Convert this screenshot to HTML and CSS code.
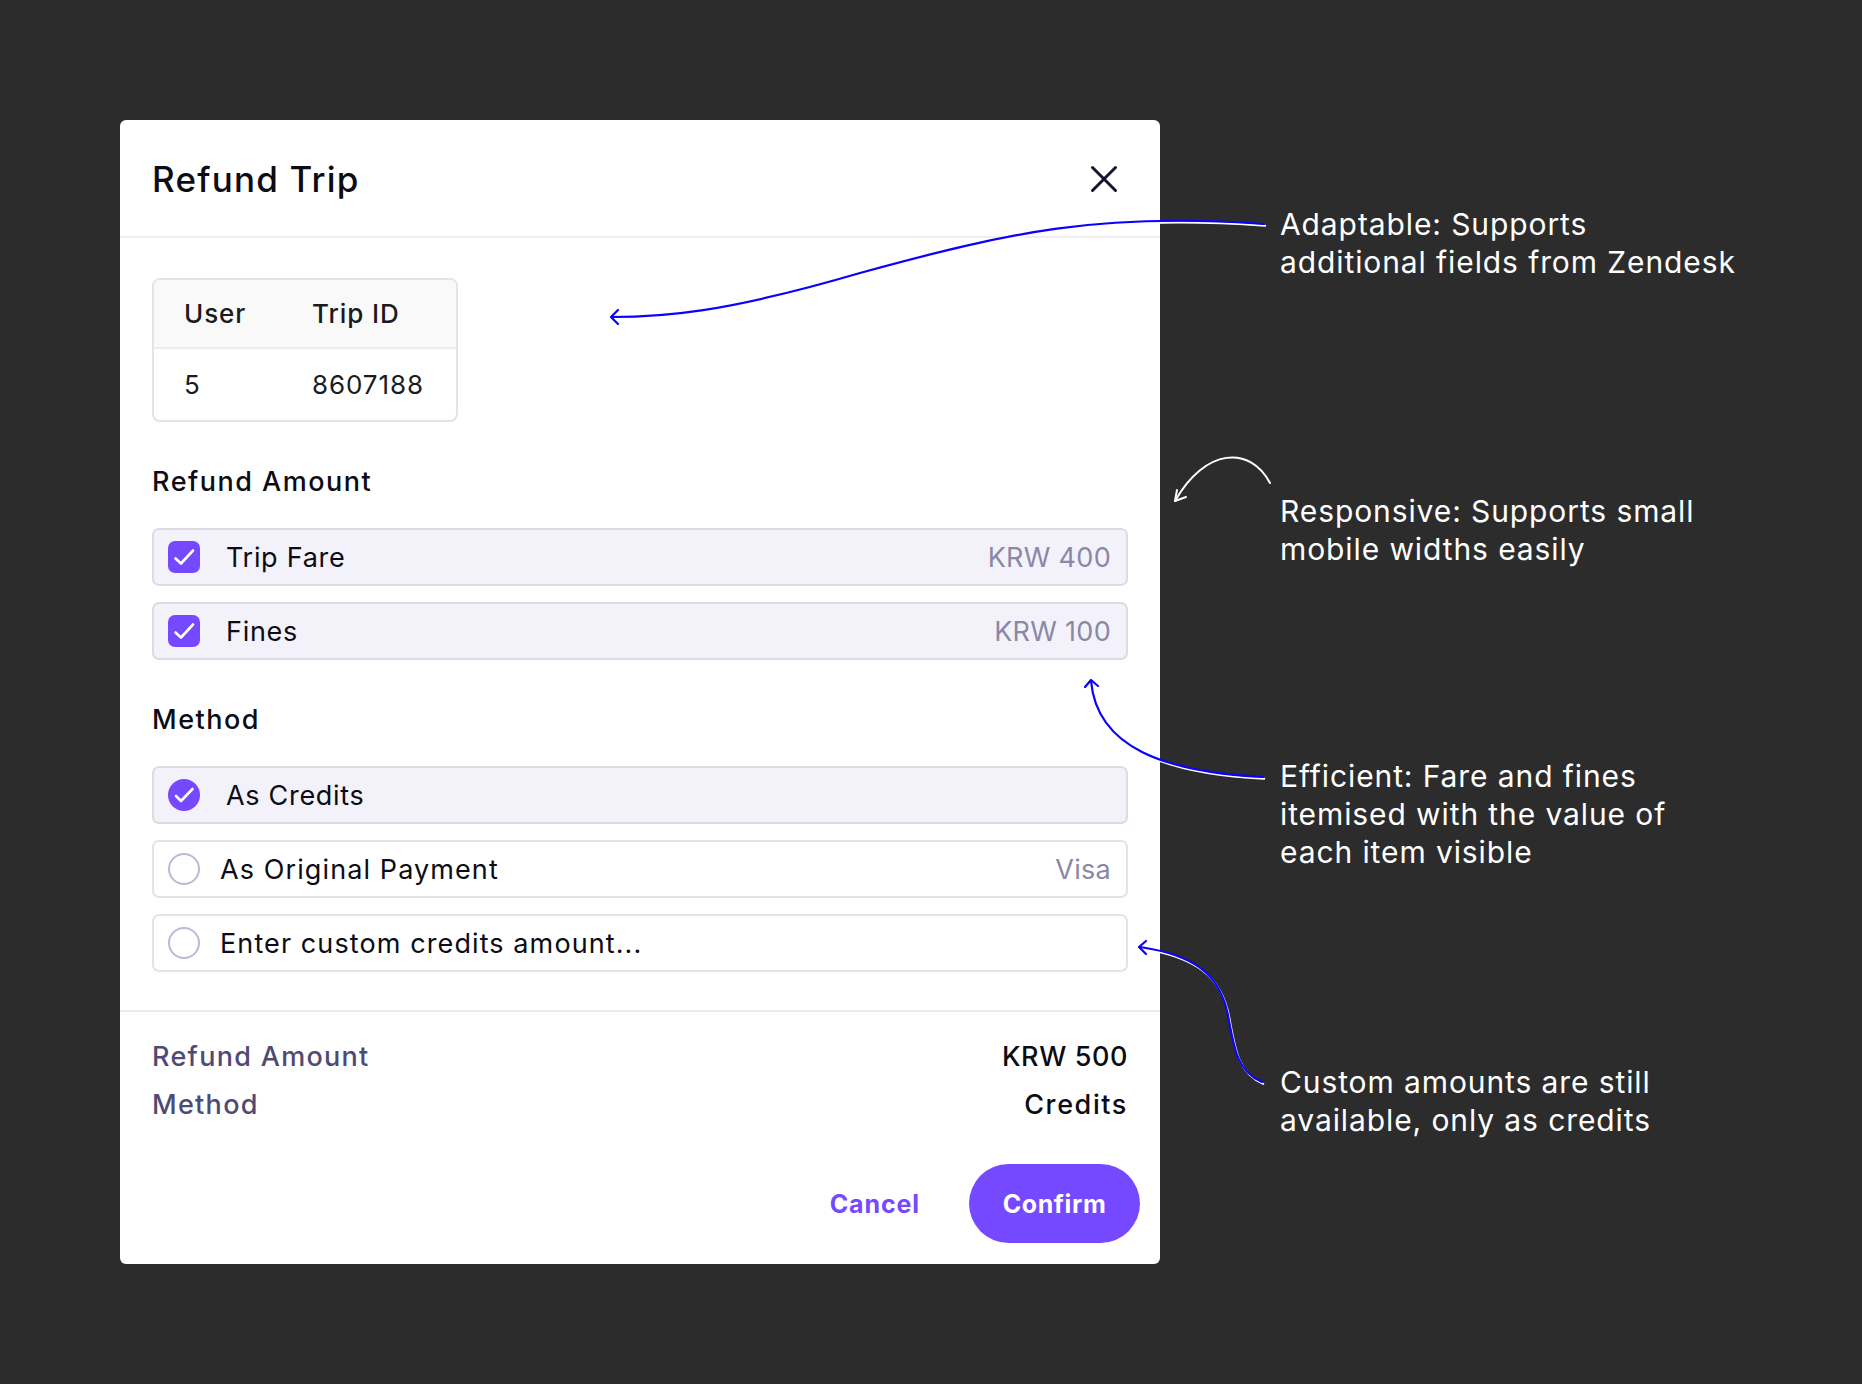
FILE: index.html
```html
<!DOCTYPE html>
<html lang="en">
<head>
<meta charset="utf-8">
<title>Refund Trip</title>
<link rel="stylesheet" href="styles.css">
</head>
<body>
<div class="stage">
  <div class="modal">
    <div class="modal-header">
      <h1 class="title">Refund Trip</h1>
      <svg class="close" width="28" height="28" viewBox="0 0 28 28"><path d="M2.5 2.5L25.5 25.5M25.5 2.5L2.5 25.5" stroke="#15142a" stroke-width="3" stroke-linecap="round" fill="none"/></svg>
    </div>
    <div class="modal-body">
      <div class="info-table">
        <div class="cell head">User</div>
        <div class="cell head">Trip ID</div>
        <div class="cell">5</div>
        <div class="cell">8607188</div>
      </div>

      <div class="section">
        <div class="section-label">Refund Amount</div>
        <div class="options">
          <div class="option selected">
            <svg class="ctl" width="32" height="32" viewBox="0 0 32 32"><rect width="32" height="32" rx="7" fill="#7549ff"/><path d="M7.5 17.5l5.5 5L25 9.5" stroke="#fff" stroke-width="2.6" fill="none" stroke-linecap="round" stroke-linejoin="round"/></svg>
            <span class="opt-label wide">Trip Fare</span>
            <span class="opt-value">KRW 400</span>
          </div>
          <div class="option selected">
            <svg class="ctl" width="32" height="32" viewBox="0 0 32 32"><rect width="32" height="32" rx="7" fill="#7549ff"/><path d="M7.5 17.5l5.5 5L25 9.5" stroke="#fff" stroke-width="2.6" fill="none" stroke-linecap="round" stroke-linejoin="round"/></svg>
            <span class="opt-label wide">Fines</span>
            <span class="opt-value">KRW 100</span>
          </div>
        </div>
      </div>

      <div class="section">
        <div class="section-label">Method</div>
        <div class="options">
          <div class="option selected">
            <svg class="ctl" width="32" height="32" viewBox="0 0 32 32"><circle cx="16" cy="16" r="16" fill="#7549ff"/><path d="M8 17l5 5L24.5 10" stroke="#fff" stroke-width="2.6" fill="none" stroke-linecap="round" stroke-linejoin="round"/></svg>
            <span class="opt-label wide">As Credits</span>
          </div>
          <div class="option">
            <svg class="ctl" width="32" height="32" viewBox="0 0 32 32"><circle cx="16" cy="16" r="15" fill="#fff" stroke="#bdb8d6" stroke-width="2"/></svg>
            <span class="opt-label">As Original Payment</span>
            <span class="opt-value">Visa</span>
          </div>
          <div class="option">
            <svg class="ctl" width="32" height="32" viewBox="0 0 32 32"><circle cx="16" cy="16" r="15" fill="#fff" stroke="#bdb8d6" stroke-width="2"/></svg>
            <span class="opt-label">Enter custom credits amount...</span>
          </div>
        </div>
      </div>
    </div>
    <div class="modal-footer">
      <div class="summary">
        <div class="sum-row"><span class="sum-key">Refund Amount</span><span class="sum-val">KRW 500</span></div>
        <div class="sum-row"><span class="sum-key">Method</span><span class="sum-val">Credits</span></div>
      </div>
      <div class="actions">
        <button class="btn-cancel">Cancel</button>
        <button class="btn-confirm">Confirm</button>
      </div>
    </div>
  </div>

  <div class="notes">
    <p class="note n1">Adaptable: Supports<br>additional fields from Zendesk</p>
    <p class="note n2">Responsive: Supports small<br>mobile widths easily</p>
    <p class="note n3">Efficient: Fare and fines<br>itemised with the value of<br>each item visible</p>
    <p class="note n4">Custom amounts are still<br>available, only as credits</p>
  </div>

  <svg class="arrows" width="1862" height="1384" viewBox="0 0 1862 1384">
    <g fill="none" stroke-linecap="round" stroke-linejoin="round">
      <g stroke="#ffffff" stroke-width="2" transform="translate(1.2 1.8)">
        <path d="M1264 224 C1100 212 1010 232 860 273 C720 314 660 317 612 317"/>
        <path d="M1263 777 C1165 772 1097 748 1091 681"/>
        <path d="M1262 1082 C1238 1072 1234 1050 1228 1015 C1220 975 1195 955 1140 947"/>
      </g>
      <g stroke="#0a00ff" stroke-width="2.2">
        <path d="M1264 224 C1100 212 1010 232 860 273 C720 314 660 317 612 317"/>
        <path d="M618 310 L611 317 L618 324"/>
        <path d="M1263 777 C1165 772 1097 748 1091 681"/>
        <path d="M1085 687 L1091 680 L1098 686"/>
        <path d="M1262 1082 C1238 1072 1234 1050 1228 1015 C1220 975 1195 955 1140 947"/>
        <path d="M1146 941 L1139 947 L1146 954"/>
      </g>
      <g stroke="#ffffff" stroke-width="2">
        <path d="M1270 483 C1250 445 1205 448 1175 501"/>
        <path d="M1177 490 L1175 501 L1186 497"/>
      </g>
    </g>
  </svg>
</div>
</body>
</html>
```

FILE: styles.css
```css
* { box-sizing: border-box; }

html, body {
  margin: 0;
  padding: 0;
  background: #2c2c2c;
}

body {
  font-family: Inter, "Liberation Sans", sans-serif;
  color: #111;
}

.stage {
  position: relative;
  width: 1862px;
  height: 1384px;
  padding: 120px 0 0 120px;
  display: flex;
  align-items: flex-start;
  gap: 120px;
}

.modal {
  width: 1040px;
  background: #ffffff;
  border-radius: 6px;
  display: flex;
  flex-direction: column;
}

.modal-header {
  height: 118px;
  border-bottom: 2px solid #efefef;
  display: flex;
  align-items: center;
  justify-content: space-between;
  padding: 2px 42px 0 32px;
}

.title {
  margin: 0;
  font-size: 35px;
  font-weight: 500;
  letter-spacing: 1.2px;
  color: #0c0c14;
}

.close { display: block; }

.modal-body {
  padding: 40px 32px 38px 32px;
}

.info-table {
  width: 306px;
  border: 2px solid #e4e4e6;
  border-radius: 8px;
  display: grid;
  grid-template-columns: 129px 173px;
  overflow: hidden;
}

.cell {
  padding-left: 30px;
  font-size: 26px;
  letter-spacing: 0.9px;
  color: #1a1a22;
  height: 71px;
  display: flex;
  align-items: center;
}

.cell:nth-child(even) { padding-left: 29px; }

.cell.head {
  background: #f9f9f9;
  font-weight: 500;
  height: 69px;
  border-bottom: 2px solid #ececee;
}

.section { margin-top: 42px; }

.section-label {
  font-size: 27px;
  line-height: 36px;
  font-weight: 500;
  letter-spacing: 1.5px;
  color: #0c0c14;
  margin-bottom: 28px;
}

.options {
  display: flex;
  flex-direction: column;
  gap: 16px;
}

.option {
  height: 58px;
  border: 2px solid #e4e3e8;
  border-radius: 7px;
  background: #ffffff;
  display: flex;
  align-items: center;
  padding: 0 15px 0 14px;
  gap: 20px;
}

.option.selected {
  background: #f3f2fa;
  border-color: #dcdbe2;
}

.ctl { flex: none; display: block; }

.opt-label {
  font-size: 27px;
  letter-spacing: 1.1px;
  color: #0c0c14;
  flex: 1;
}

.opt-label.wide { margin-left: 6px; letter-spacing: 0.7px; }

.opt-value {
  font-size: 27px;
  letter-spacing: 0.3px;
  color: #8b88a6;
}

.modal-footer {
  border-top: 2px solid #ececec;
  padding: 21px 20px 21px 32px;
}

.summary { padding-right: 12px; }

.sum-row {
  display: flex;
  justify-content: space-between;
  line-height: 48px;
  font-size: 27px;
  font-weight: 500;
  letter-spacing: 1.3px;
}

.sum-key { color: #4f4a74; }
.sum-val { color: #0c0c14; letter-spacing: 0.6px; }
.sum-row + .sum-row .sum-val { letter-spacing: 1.6px; }

.actions {
  margin-top: 35px;
  display: flex;
  justify-content: flex-end;
  align-items: center;
  gap: 49px;
}

button {
  font-family: inherit;
  border: none;
  cursor: pointer;
}

.btn-cancel {
  background: none;
  padding: 0;
  font-size: 25px;
  font-weight: 700;
  letter-spacing: 0.9px;
  color: #7549ff;
}

.btn-confirm {
  width: 171px;
  height: 79px;
  border-radius: 40px;
  background: #7549ff;
  color: #ffffff;
  font-size: 25px;
  font-weight: 700;
  letter-spacing: 0.6px;
}

.notes {
  display: flex;
  flex-direction: column;
}

.note {
  margin: 0;
  font-size: 30px;
  line-height: 38px;
  color: #ffffff;
  white-space: nowrap;
  letter-spacing: 0.9px;
}

.n1 { margin-top: 85px; }
.n2 { margin-top: 211px; }
.n3 { margin-top: 189px; }
.n4 { margin-top: 192px; }

.arrows {
  position: absolute;
  left: 0;
  top: 0;
  pointer-events: none;
}
```
